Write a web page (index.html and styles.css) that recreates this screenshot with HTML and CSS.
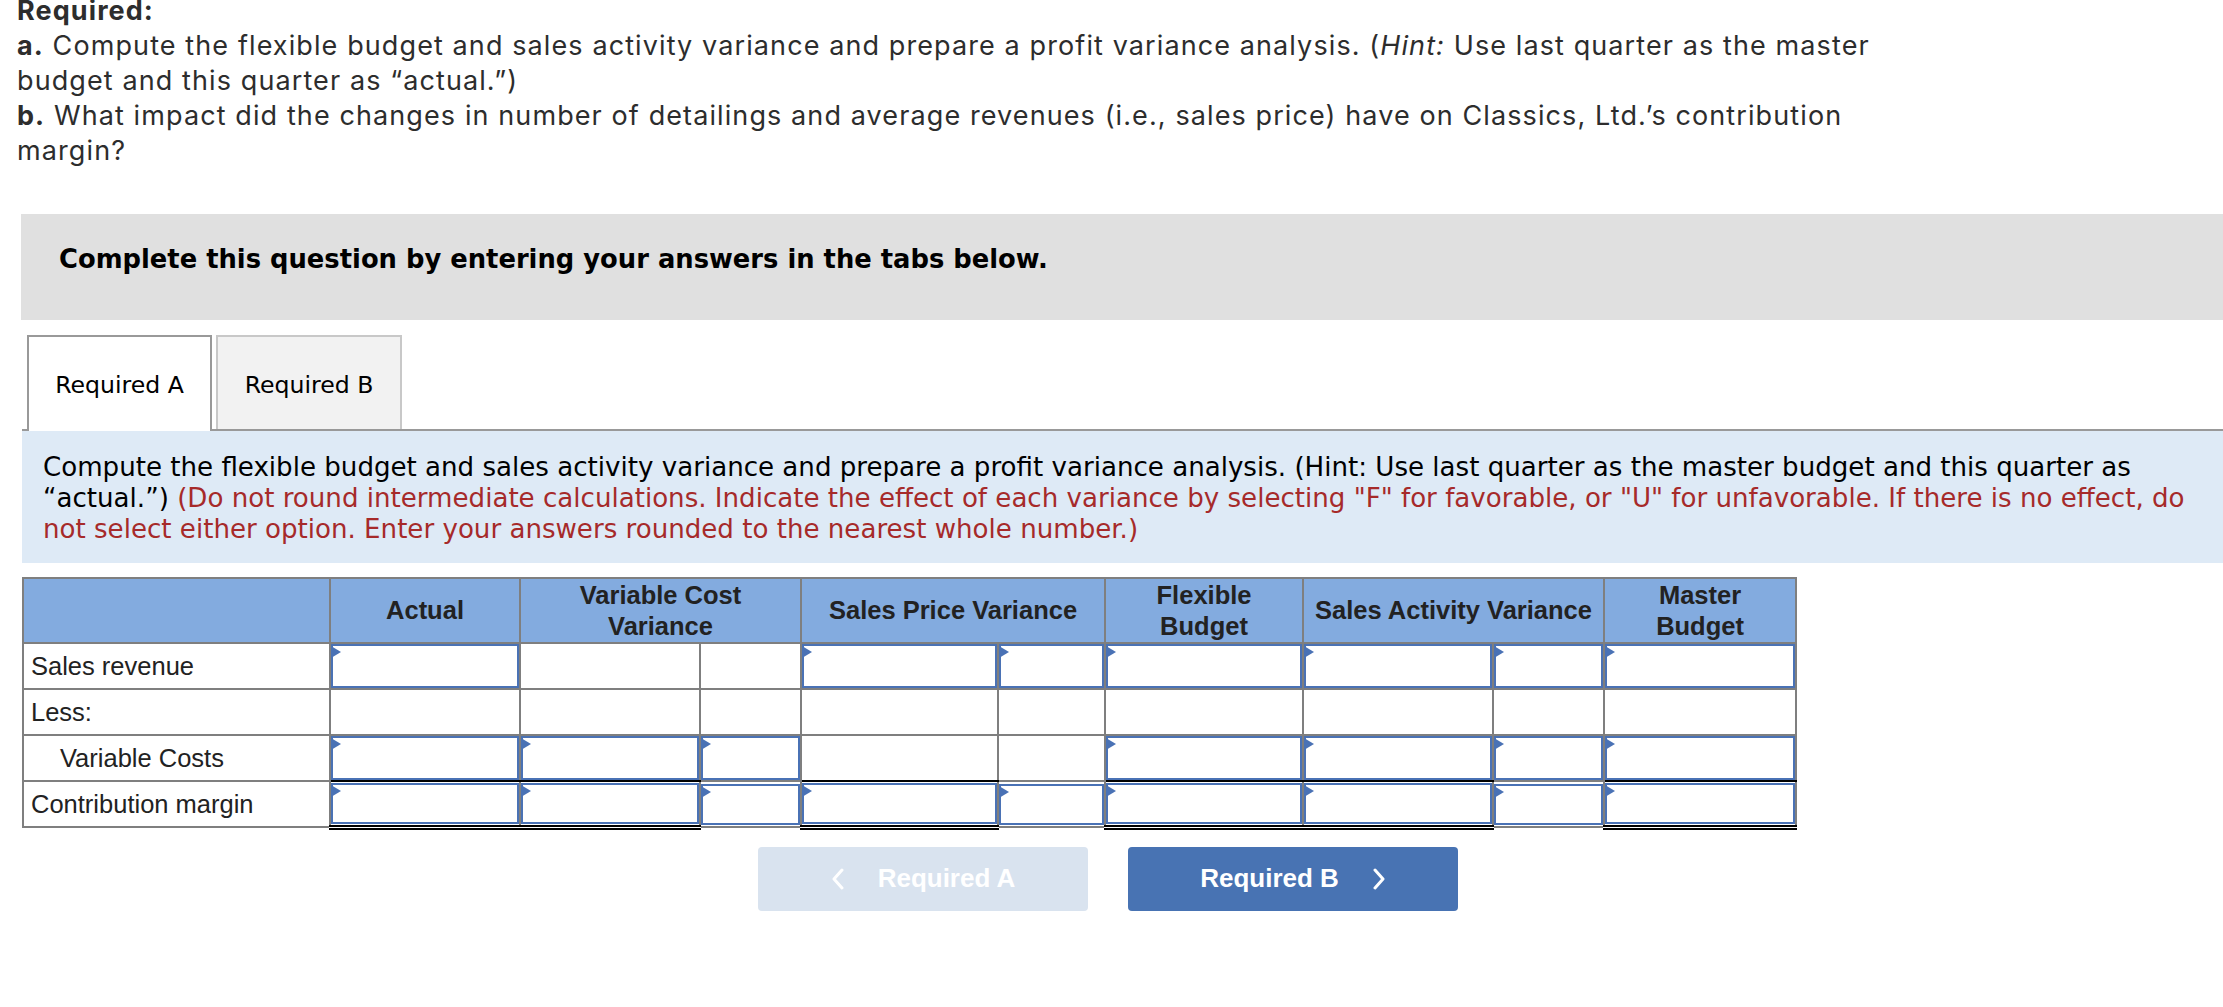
FILE: index.html
```html
<!DOCTYPE html>
<html lang="en">
<head>
<meta charset="utf-8">
<title>Profit variance analysis</title>
<link rel="stylesheet" href="styles.css">
</head>
<body>
<div class="question">
  <p class="req-title">Required:</p>
  <p><b>a.</b> Compute the flexible budget and sales activity variance and prepare a profit variance analysis. (<i>Hint:</i> Use last quarter as the master budget and this quarter as “actual.”)</p>
  <p><b>b.</b> What impact did the changes in number of detailings and average revenues (i.e., sales price) have on Classics, Ltd.’s contribution margin?</p>
</div>

<div class="main">
  <div class="banner">Complete this question by entering your answers in the tabs below.</div>

  <div class="tabs">
    <div class="tab active">Required A</div>
    <div class="tab inactive">Required B</div>
  </div>

  <div class="instructions">Compute the flexible budget and sales activity variance and prepare a profit variance analysis. (Hint: Use last quarter as the master budget and this quarter as “actual.”) <span class="note">(Do not round intermediate calculations. Indicate the effect of each variance by selecting "F" for favorable, or "U" for unfavorable. If there is no effect, do not select either option. Enter your answers rounded to the nearest whole number.)</span></div>

  <table class="grid">
    <colgroup>
      <col class="c-label">
      <col class="c-actual">
      <col class="c-vcv">
      <col class="c-vcv-fu">
      <col class="c-spv">
      <col class="c-spv-fu">
      <col class="c-flex">
      <col class="c-sav">
      <col class="c-sav-fu">
      <col class="c-master">
    </colgroup>
    <thead>
      <tr>
        <th></th>
        <th>Actual</th>
        <th colspan="2">Variable Cost<br>Variance</th>
        <th colspan="2">Sales Price Variance</th>
        <th>Flexible<br>Budget</th>
        <th colspan="2">Sales Activity Variance</th>
        <th>Master<br>Budget</th>
      </tr>
    </thead>
    <tbody>
      <tr>
        <td class="label">Sales revenue</td>
        <td><div class="field"></div></td>
        <td></td>
        <td></td>
        <td><div class="field"></div></td>
        <td><div class="field"></div></td>
        <td><div class="field"></div></td>
        <td><div class="field"></div></td>
        <td><div class="field"></div></td>
        <td><div class="field"></div></td>
      </tr>
      <tr>
        <td class="label">Less:</td>
        <td></td>
        <td></td>
        <td></td>
        <td></td>
        <td></td>
        <td></td>
        <td></td>
        <td></td>
        <td></td>
      </tr>
      <tr>
        <td class="label indent">Variable Costs</td>
        <td class="ul"><div class="field"></div></td>
        <td class="ul"><div class="field"></div></td>
        <td><div class="field"></div></td>
        <td class="ul"></td>
        <td></td>
        <td class="ul"><div class="field"></div></td>
        <td class="ul"><div class="field"></div></td>
        <td><div class="field"></div></td>
        <td class="ul"><div class="field"></div></td>
      </tr>
      <tr class="total">
        <td class="label">Contribution margin</td>
        <td class="dbl"><div class="field"></div></td>
        <td class="dbl"><div class="field"></div></td>
        <td><div class="field"></div></td>
        <td class="dbl"><div class="field"></div></td>
        <td><div class="field"></div></td>
        <td class="dbl"><div class="field"></div></td>
        <td class="dbl"><div class="field"></div></td>
        <td><div class="field"></div></td>
        <td class="dbl"><div class="field"></div></td>
      </tr>
    </tbody>
  </table>

  <div class="nav">
    <div class="btn prev">
      <svg class="chev" width="14" height="22" viewBox="0 0 14 22"><polyline points="11,2 3,11 11,20" fill="none" stroke="#fff" stroke-width="3" stroke-linecap="round" stroke-linejoin="round"/></svg>
      <span>Required A</span>
    </div>
    <div class="btn next">
      <span>Required B</span>
      <svg class="chev" width="14" height="22" viewBox="0 0 14 22"><polyline points="3,2 11,11 3,20" fill="none" stroke="#fff" stroke-width="3" stroke-linecap="round" stroke-linejoin="round"/></svg>
    </div>
  </div>
</div>
</body>
</html>
```

FILE: styles.css
```css
html, body {
  margin: 0;
  padding: 0;
  background: #ffffff;
}

.question {
  margin-top: -7px;
  padding-left: 17px;
  width: 1880px;
  font-family: Inter, "Open Sans", sans-serif;
  font-size: 27px;
  letter-spacing: 1.1px;
  line-height: 35px;
  color: #2d2d2d;
}

.question p {
  margin: 0;
}

.question .req-title {
  font-weight: bold;
}

.main {
  margin-left: 21px;
}

.banner {
  margin-top: 46px;
  height: 106px;
  box-sizing: border-box;
  padding: 30px 0 0 38px;
  background: #e0e0e0;
  font-family: "DejaVu Sans", Verdana, sans-serif;
  font-weight: bold;
  font-size: 25.8px;
  color: #000;
}

.tabs {
  margin: 15px 0 0 1px;
  padding-left: 5px;
  display: flex;
  align-items: flex-start;
  gap: 4px;
  border-bottom: 2px solid #999999;
}

.tab {
  box-sizing: border-box;
  height: 94px;
  padding-top: 3px;
  display: flex;
  align-items: center;
  justify-content: center;
  border: 2px solid;
  border-bottom: 0;
  font-family: "DejaVu Sans", Verdana, sans-serif;
  font-size: 23.6px;
  color: #000;
}

.tab.active {
  width: 185px;
  height: 96px;
  margin-bottom: -2px;
  padding-bottom: 2px;
  border-color: #999999;
  background: #ffffff;
}

.tab.inactive {
  width: 186px;
  border-color: #c8c8c8;
  background: #f2f2f2;
}

.instructions {
  margin-left: 1px;
  height: 132px;
  box-sizing: border-box;
  padding: 21px 21px 0 21px;
  background: #deeaf6;
  font-family: "DejaVu Sans", Verdana, sans-serif;
  font-size: 26.1px;
  line-height: 31px;
  color: #000;
}

.instructions .note {
  color: #a62a2a;
}

.grid {
  margin: 14px 0 0 1px;
  border-collapse: collapse;
  table-layout: fixed;
  width: 1775px;
  font-family: "Liberation Sans", Arial, sans-serif;
  font-size: 25.5px;
}

.c-label { width: 307px; }
.c-actual { width: 190px; }
.c-vcv { width: 180px; }
.c-vcv-fu { width: 101px; }
.c-spv { width: 197px; }
.c-spv-fu { width: 107px; }
.c-flex { width: 198px; }
.c-sav { width: 190px; }
.c-sav-fu { width: 111px; }
.c-master { width: 192px; }

.grid th,
.grid td {
  border: 2px solid #7f7f7f;
  padding: 0;
}

.grid th {
  height: 63px;
  background: #83abdf;
  color: #222;
  font-weight: bold;
  line-height: 31px;
  text-align: center;
}

.grid td.label {
  padding-left: 7px;
  line-height: 44px;
  color: #222;
  white-space: nowrap;
}

.grid td.indent {
  padding-left: 36px;
}

.grid td.ul {
  border-bottom: 2px solid #000;
}

.grid td.dbl {
  border-bottom: 5px double #000;
}

.field {
  position: relative;
  height: 44px;
  box-sizing: border-box;
  border: 2px solid #4a72b5;
  background: #fff;
}

.total .field {
  height: 41px;
}

.field::before {
  content: "";
  position: absolute;
  left: -2px;
  top: 0;
  border-left: 10px solid #4a72b5;
  border-top: 6px solid transparent;
  border-bottom: 6px solid transparent;
}

.nav {
  margin-top: 17px;
  padding-right: 28px;
  display: flex;
  justify-content: center;
  gap: 40px;
}

.btn {
  width: 330px;
  height: 64px;
  border-radius: 4px;
  display: flex;
  align-items: center;
  justify-content: center;
  gap: 33px;
  font-family: "Liberation Sans", Arial, sans-serif;
  font-weight: bold;
  font-size: 26px;
  color: #fff;
}

.btn.prev {
  background: #d9e3ef;
}

.btn.next {
  background: #4873b3;
}

.chev {
  display: block;
}
```
